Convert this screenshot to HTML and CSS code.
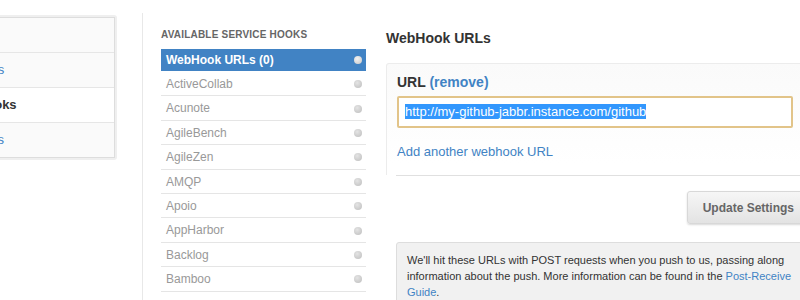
FILE: index.html
```html
<!DOCTYPE html>
<html>

<head>
    <title>Service Hooks</title>
    <link rel="stylesheet" href="styles.css">
</head>

<body>
    <div class="page">
        <div class="sidebar">
            <ul class="admin-nav">
                <li><a href="#">Options</a></li>
                <li><a href="#">Collaborators</a></li>
                <li class="current">Service Hooks</li>
                <li><a href="#">Deploy Keys</a></li>
            </ul>
        </div>

        <div class="main">
            <div class="hook-list">
                <h4>Available Service Hooks</h4>
                <ul>
                    <li class="selected">WebHook URLs (0) <span class="dot"></span></li>
                    <li>ActiveCollab <span class="dot"></span></li>
                    <li>Acunote <span class="dot"></span></li>
                    <li>AgileBench <span class="dot"></span></li>
                    <li>AgileZen <span class="dot"></span></li>
                    <li>AMQP <span class="dot"></span></li>
                    <li>Apoio <span class="dot"></span></li>
                    <li>AppHarbor <span class="dot"></span></li>
                    <li>Backlog <span class="dot"></span></li>
                    <li>Bamboo <span class="dot"></span></li>
                </ul>
            </div>

            <div class="hook-settings">
                <h3>WebHook URLs</h3>
                <div class="url-box">
                    <label>URL <a href="#">(remove)</a></label>
                    <div class="url-input"><span class="selection">http://my-github-jabbr.instance.com/github</span></div>
                    <a href="#" class="add-url">Add another webhook URL</a>
                </div>
                <div class="form-actions">
                    <button class="btn">Update Settings</button>
                </div>
                <div class="info">
                    We'll hit these URLs with POST requests when you push to us, passing along
                    information about the push. More information can be found in the
                    <a href="#">Post-Receive Guide</a>.
                </div>
            </div>
        </div>
    </div>
</body>

</html>
```

FILE: styles.css
```css
body {
    margin: 0;
    width: 800px;
    height: 300px;
    overflow: hidden;
    background-color: #ffffff;
    font-family: 'Liberation Sans', Arial, sans-serif;
    color: #333;
}

a {
    color: #4183c4;
    text-decoration: none;
}

ul {
    list-style: none;
    margin: 0;
    padding: 0;
}

.page {
    display: flex;
    margin-left: -95px;
    padding-top: 13px;
}

/* left admin menu, mostly off screen */
.sidebar {
    flex-shrink: 0;
    width: 208px;
    margin-top: 2px;
    margin-right: 25px;
    padding: 2px;
    background-color: #efefef;
    border-radius: 3px;
    align-self: flex-start;
}

.admin-nav {
    border: 1px solid #dddddd;
    background-color: #fafafa;
}

.admin-nav li {
    font-size: 13px;
    line-height: 17px;
    padding: 8px 19px 9px;
    border-bottom: 1px solid #e6e6e6;
    white-space: nowrap;
}

.admin-nav li:last-child {
    border-bottom: none;
    letter-spacing: 0.4px;
}

.admin-nav li.current {
    background-color: #ffffff;
    font-weight: bold;
    color: #333;
}

.main {
    flex-shrink: 0;
    display: flex;
    border-left: 1px solid #e8e8e8;
    padding-left: 18px;
    height: 300px;
}

.hook-list {
    width: 205px;
}

.hook-list h4 {
    margin: 15px 0 7px;
    font-size: 10px;
    line-height: 14px;
    text-transform: uppercase;
    color: #666;
    letter-spacing: 0.2px;
}

.hook-list li {
    display: flex;
    justify-content: space-between;
    align-items: center;
    font-size: 12px;
    line-height: 14.4px;
    padding: 5px 4px 4px 5px;
    border-bottom: 1px solid #e5e5e5;
    color: #999;
}

.hook-list li.selected {
    background-color: #4183c4;
    color: #ffffff;
    font-weight: bold;
    line-height: 16px;
    padding-top: 3px;
    padding-bottom: 3px;
    border-bottom: none;
    margin-bottom: 1px;
}

.dot {
    width: 8px;
    height: 8px;
    border-radius: 50%;
    background: radial-gradient(circle at 40% 35%, #e4e4e4, #bdbdbd);
}

.selected .dot {
    background: radial-gradient(circle at 40% 35%, #f2f2f2, #c8c8c8);
}

.hook-settings {
    width: 424px;
    margin-left: 20px;
}

.hook-settings h3 {
    margin: 16px 0 16px;
    font-size: 14px;
    line-height: 18px;
}

.url-box {
    border: 1px solid #ececec;
    border-bottom: none;
    border-radius: 3px 0 0 0;
    background: linear-gradient(#fafafa, #ffffff 100px);
    padding: 9px 10px 5px;
    height: 97px;
}

.url-box label {
    display: block;
    font-size: 14px;
    line-height: 18px;
    font-weight: bold;
}

.url-input {
    width: 380px;
    height: 28px;
    margin-top: 5px;
    padding: 0 6px;
    border: 2px solid #e2c489;
    border-radius: 2px;
    background-color: #ffffff;
    font-size: 13px;
    line-height: 28px;
}

.selection {
    background-color: #3297fd;
    color: #ffffff;
}

.add-url {
    display: block;
    margin-top: 16px;
    font-size: 13px;
    line-height: 16px;
}

.form-actions {
    margin-left: 10px;
    border-top: 1px solid #e0e0e0;
    padding: 15px 0 18px;
    display: flex;
    justify-content: flex-end;
}

.btn {
    height: 33px;
    padding: 0 15px;
    font-family: 'Liberation Sans', Arial, sans-serif;
    font-size: 12px;
    font-weight: bold;
    color: #666;
    background: linear-gradient(#f6f6f6, #e3e3e3);
    border: 1px solid #d8d8d8;
    border-radius: 3px;
    box-shadow: 0 1px 2px rgba(0, 0, 0, 0.15);
}

.info {
    margin-left: 10px;
    padding: 9px 10px 10px;
    background-color: #f1f1f1;
    border: 1px solid #dddddd;
    border-radius: 3px;
    font-size: 11px;
    line-height: 16px;
    color: #333;
}
```
